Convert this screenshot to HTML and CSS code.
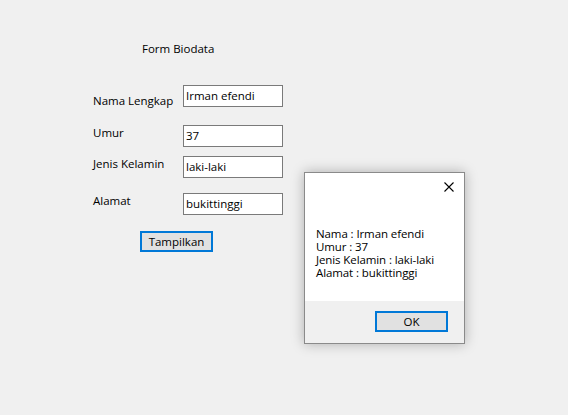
FILE: index.html
```html
<!DOCTYPE html>
<html>
<head>
<meta charset="utf-8">
<link rel="stylesheet" href="styles.css">
</head>
<body>
<div class="form">
  <div class="title">Form Biodata</div>
  <div class="row row-nama">
    <label class="lbl">Nama Lengkap</label>
    <div class="input">Irman efendi</div>
  </div>
  <div class="row row-umur">
    <label class="lbl">Umur</label>
    <div class="input">37</div>
  </div>
  <div class="row row-jenis">
    <label class="lbl">Jenis Kelamin</label>
    <div class="input">laki-laki</div>
  </div>
  <div class="row row-alamat">
    <label class="lbl">Alamat</label>
    <div class="input">bukittinggi</div>
  </div>
  <div class="btn-row"><button class="btn">Tampilkan</button></div>
</div>

<div class="dialog">
  <div class="dlg-body">
    <div class="dlg-top">
      <svg class="close" width="10" height="10" viewBox="0 0 10 10"><path d="M0.5 0.5 L9.5 9.5 M9.5 0.5 L0.5 9.5" stroke="#000" stroke-width="1.1" fill="none"/></svg>
    </div>
    <p class="msg">Nama : Irman efendi<br>Umur : 37<br>Jenis Kelamin : laki-laki<br>Alamat : bukittinggi</p>
  </div>
  <div class="dlg-foot"><button class="btn ok">OK</button></div>
</div>
</body>
</html>
```

FILE: styles.css
```css
html, body {
  margin: 0;
  padding: 0;
  background: #f0f0f0;
  width: 568px;
  height: 415px;
  overflow: hidden;
  font-family: "Open Sans", "Noto Sans", "Liberation Sans", sans-serif;
  font-size: 11.5px;
  color: #000;
}

.form {
  padding: 40px 0 0 93px;
}

.title {
  margin-left: 49px;
  line-height: 15px;
  padding-top: 1px;
  height: 15px;
}

.row {
  display: grid;
  grid-template-columns: 90px 100px;
  align-items: start;
  height: 22px;
}

.lbl {
  line-height: 15px;
}

.input {
  box-sizing: border-box;
  height: 22px;
  border: 1px solid #7a7a7a;
  background: #fff;
  padding: 2px 0 0 2px;
  line-height: 15px;
}

.row-nama { margin-top: 29px; }
.row-nama .lbl { padding-top: 8px; }
.row-umur { margin-top: 18px; }
.row-umur .lbl { padding-top: 0; }
.row-jenis { margin-top: 9px; }
.row-jenis .lbl { padding-top: 0; }
.row-alamat { margin-top: 15px; }
.row-alamat .lbl { padding-top: 0; }

.btn-row {
  margin-top: 16px;
  padding-left: 47px;
}

.btn {
  box-sizing: border-box;
  width: 73px;
  height: 21px;
  border: 2px solid #0078d7;
  background: #e1e1e1;
  font: inherit;
  padding: 0;
  margin: 0;
  color: #000;
  line-height: 15px;
}

.dialog {
  position: absolute;
  left: 304px;
  top: 172px;
  width: 161px;
  height: 172px;
  box-sizing: border-box;
  border: 1px solid #8a8a8a;
  background: #f0f0f0;
  box-shadow: 0 0 12px rgba(0,0,0,0.28);
  display: flex;
  flex-direction: column;
}

.dlg-body {
  background: #fff;
  height: 128px;
}

.dlg-top {
  display: flex;
  justify-content: flex-end;
  padding: 9px 10px 0 0;
  height: 10px;
}

.msg {
  margin: 0;
  padding: 35px 0 0 11px;
  line-height: 13px;
  letter-spacing: -0.1px;
}

.dlg-foot {
  display: flex;
  justify-content: flex-end;
  padding: 10px 16px 0 0;
}

.ok {
  width: 73px;
  height: 21px;
}
```
